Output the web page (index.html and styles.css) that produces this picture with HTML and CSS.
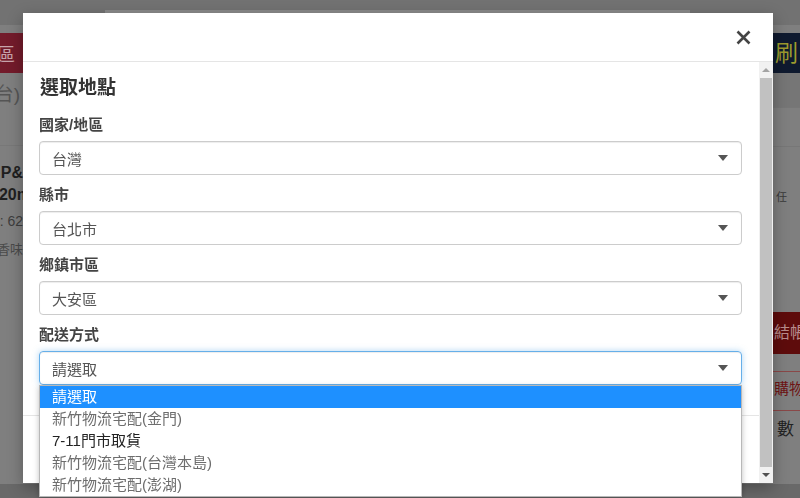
FILE: index.html
```html
<!DOCTYPE html>
<html lang="zh-Hant">
<head>
  <meta charset="UTF-8">
  <title>選取地點</title>
  <link rel="stylesheet" href="styles.css">
</head>
<body>
  <div class="page">
    <div class="site-head"><div class="search-bar"></div></div>
    <div class="page-main">
      <div class="side-left">
        <div class="row tag-red"><span>區</span></div>
        <div class="row left-sub"><span>台)</span></div>
        <div class="product">
          <div class="row p-name"><span>P&amp;</span></div>
          <div class="row p-name"><span class="cut">20m</span></div>
          <div class="row p-meta"><span>: 62</span></div>
          <div class="row p-desc"><span>香味</span></div>
        </div>
      </div>
      <div class="side-right">
        <div class="tag-navy">刷</div>
        <div class="rule rule-a"></div>
        <div class="rule rule-b"></div>
        <div class="note">任</div>
        <div class="btn-checkout">結帳</div>
        <div class="cart-link">購物</div>
        <div class="count">數</div>
      </div>
    </div>
    <div class="site-foot"></div>
  </div>

  <div class="modal">
    <div class="modal-header">
      <button class="close" type="button">
        <svg width="15" height="15" viewBox="0 0 15 15">
          <path d="M1.5 1.5 L13.5 13.5 M13.5 1.5 L1.5 13.5" stroke="#444" stroke-width="2.6" fill="none"/>
        </svg>
      </button>
    </div>
    <div class="modal-scroll">
      <div class="modal-body">
        <h4 class="modal-title">選取地點</h4>
        <div class="form-group">
          <label>國家/地區</label>
          <div class="form-control"><span>台灣</span><i class="caret"></i></div>
        </div>
        <div class="form-group">
          <label>縣市</label>
          <div class="form-control"><span>台北市</span><i class="caret"></i></div>
        </div>
        <div class="form-group">
          <label>鄉鎮市區</label>
          <div class="form-control"><span>大安區</span><i class="caret"></i></div>
        </div>
        <div class="form-group">
          <label>配送方式</label>
          <div class="form-control focused"><span>請選取</span><i class="caret"></i></div>
        </div>
        <div class="modal-footer"></div>
      </div>
      <div class="scrollbar">
        <div class="sb-btn"><i class="sb-up"></i></div>
        <div class="sb-track"><div class="sb-thumb"></div></div>
        <div class="sb-btn"><i class="sb-down"></i></div>
      </div>
    </div>

    <ul class="dropdown">
      <li class="active">請選取</li>
      <li class="disabled">新竹物流宅配(金門)</li>
      <li>7-11門市取貨</li>
      <li class="disabled">新竹物流宅配(台灣本島)</li>
      <li class="disabled">新竹物流宅配(澎湖)</li>
    </ul>
  </div>
</body>
</html>
```

FILE: styles.css
```css
* {
  box-sizing: border-box;
}

body {
  margin: 0;
  width: 800px;
  height: 498px;
  overflow: hidden;
  background: #7f7f7f;
  font-family: "Liberation Sans", "Noto Sans CJK TC", sans-serif;
  color: #333;
}

/* page behind the backdrop (already dimmed) */
.page {
  height: 498px;
  display: flex;
  flex-direction: column;
}

.site-head {
  height: 25px;
  padding: 10px 0 0 105px;
  background: #727272;
}

.search-bar {
  width: 585px;
  height: 15px;
  background: #8a8a8a;
}

.page-main {
  flex: 1;
  display: flex;
  justify-content: space-between;
}

.site-foot {
  height: 14px;
  background: #696969;
}

.side-left {
  width: 23px;
  overflow: hidden;
}

.row {
  display: flex;
  justify-content: flex-end;
  white-space: nowrap;
}

.tag-red {
  margin-top: 8px;
  height: 40px;
  align-items: center;
  padding-right: 8px;
  background: #731b2b;
  color: #c7a3aa;
  font-size: 18px;
}

.left-sub {
  margin-top: 12px;
  line-height: 20px;
  font-size: 19px;
  color: #555;
  padding-right: 3px;
}

.product {
  margin-top: 40px;
  border-top: 1px solid #787878;
  padding-top: 16px;
}

.p-name {
  font-size: 16px;
  font-weight: bold;
  line-height: 22px;
  color: #1f1f1f;
}

.p-name .cut {
  margin-right: -8px;
}

.p-meta {
  margin-top: 4px;
  font-size: 14px;
  line-height: 22px;
  color: #3d3d3d;
}

.p-desc {
  margin-top: 7px;
  font-size: 13px;
  line-height: 22px;
  color: #4a4a4a;
}

.side-right {
  width: 27px;
  overflow: hidden;
  white-space: nowrap;
}

.tag-navy {
  margin-top: 8px;
  height: 40px;
  line-height: 40px;
  padding-left: 2px;
  background: #0f1a2f;
  color: #9d9b2e;
  font-size: 23px;
}

.rule {
  border-bottom: 1px solid #777;
}

.rule-a {
  height: 35px;
  background: #767676;
}

.rule-b {
  height: 39px;
}

.note {
  margin-top: 42px;
  line-height: 16px;
  font-size: 11px;
  padding-left: 3px;
  color: #3a3a3a;
}

.btn-checkout {
  margin-top: 107px;
  height: 42px;
  line-height: 42px;
  background: #5e0c0c;
  color: #b98c8c;
  font-size: 16px;
  padding-left: 1px;
}

.cart-link {
  margin-top: 17px;
  border-top: 1px solid #8a4848;
  border-bottom: 1px solid #8a4848;
  padding: 7px 0 11px 1px;
  line-height: 20px;
  font-size: 15px;
  color: #6e1414;
}

.count {
  margin-top: 8px;
  line-height: 22px;
  font-size: 17px;
  color: #222;
  padding-left: 4px;
}

/* modal */
.modal {
  position: fixed;
  top: 13px;
  left: 23px;
  width: 750px;
  height: 470px;
  background: #fff;
  box-shadow: 0 5px 15px rgba(0, 0, 0, 0.3);
}

.modal-header {
  height: 49px;
  border-bottom: 1px solid #e5e5e5;
  display: flex;
  justify-content: flex-end;
  align-items: center;
  padding-right: 22px;
}

.close {
  border: none;
  background: none;
  padding: 0;
  width: 15px;
  height: 15px;
  display: flex;
}

.modal-scroll {
  height: 421px;
  display: flex;
}

.modal-body {
  flex: 1;
  overflow: hidden;
  padding: 15px 0 0;
}

.modal-title {
  margin: 0 17px 16px 17px;
  font-size: 19px;
  line-height: 22px;
  font-weight: bold;
  color: #333;
}

.form-group {
  margin: 0 17px 10px 16px;
}

.form-group label {
  display: block;
  margin-bottom: 6px;
  font-size: 15px;
  line-height: 20px;
  font-weight: bold;
  color: #444;
}

.form-control {
  height: 34px;
  border: 1px solid #ccc;
  border-radius: 4px;
  box-shadow: inset 0 1px 1px rgba(0, 0, 0, 0.075);
  display: flex;
  align-items: center;
  justify-content: space-between;
  padding: 0 13px 0 12px;
  font-size: 15px;
  color: #555;
}

.form-control.focused {
  border-color: #66afe9;
  box-shadow: inset 0 1px 1px rgba(0, 0, 0, 0.075), 0 0 6px rgba(102, 175, 233, 0.5);
}

.caret {
  width: 0;
  height: 0;
  border-left: 5px solid transparent;
  border-right: 5px solid transparent;
  border-top: 6px solid #555;
}

.modal-footer {
  margin-top: 30px;
  height: 80px;
  border-top: 1px solid #e5e5e5;
}

.scrollbar {
  width: 14px;
  background: #f1f1f1;
  display: flex;
  flex-direction: column;
}

.sb-btn {
  height: 16px;
  display: flex;
  align-items: center;
  justify-content: center;
}

.sb-up {
  border-left: 4px solid transparent;
  border-right: 4px solid transparent;
  border-bottom: 4px solid #a3a3a3;
}

.sb-down {
  border-left: 4px solid transparent;
  border-right: 4px solid transparent;
  border-top: 4px solid #505050;
}

.sb-track {
  flex: 1;
  padding: 0 1px;
}

.sb-thumb {
  height: 100%;
  background: #c1c1c1;
}

.dropdown {
  position: absolute;
  top: 372px;
  left: 16px;
  width: 703px;
  margin: 0;
  padding: 0;
  list-style: none;
  background: #fff;
  border: 1px solid #b8b8b8;
  box-shadow: 0 2px 6px rgba(0, 0, 0, 0.25);
}

.dropdown li {
  height: 22px;
  line-height: 22px;
  padding-left: 12px;
  font-size: 15px;
  color: #222;
}

.dropdown li.disabled {
  color: #6d6d6d;
}

.dropdown li.active {
  background: #1e90ff;
  color: #fff;
}
```
